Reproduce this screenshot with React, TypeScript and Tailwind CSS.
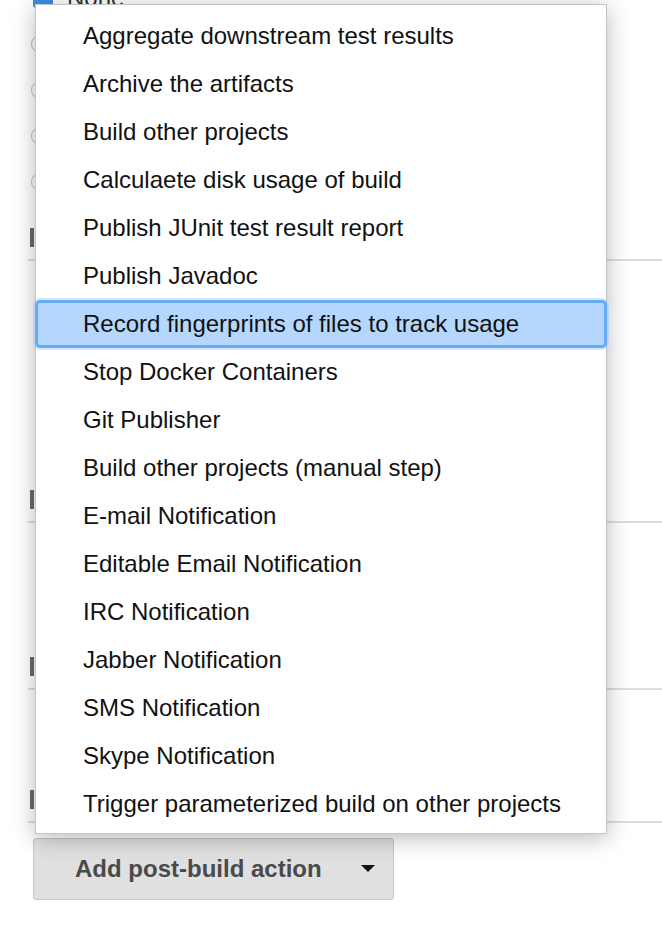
const items = [
  'Aggregate downstream test results',
  'Archive the artifacts',
  'Build other projects',
  'Calculaete disk usage of build',
  'Publish JUnit test result report',
  'Publish Javadoc',
  'Record fingerprints of files to track usage',
  'Stop Docker Containers',
  'Git Publisher',
  'Build other projects (manual step)',
  'E-mail Notification',
  'Editable Email Notification',
  'IRC Notification',
  'Jabber Notification',
  'SMS Notification',
  'Skype Notification',
  'Trigger parameterized build on other projects',
];

const selected = 6;

function Section({ height }: { height: number }) {
  // header handle on the left, divider line at the bottom
  return (
    <div className="flex flex-col justify-end" style={{ height }}>
      <div className="w-[4px] h-[19px] bg-[#6b6b6b] ml-[2px]" />
      <div className="h-[12px]" />
      <div className="h-[2px] bg-[#dddddd]" />
    </div>
  );
}

export default function App() {
  return (
    <div
      className="relative w-[662px] h-[926px] bg-white overflow-hidden"
      style={{ fontFamily: '"Liberation Sans", Arial, sans-serif' }}
    >
      {/* page behind the menu */}
      <div className="pl-[28px] flex flex-col">
        <div className="flex items-center gap-[14px] -mt-[12px] h-[20px]">
          <div className="w-[20px] h-[20px] rounded-[3px] bg-[#3d8fe8] ml-[5px]" />
          <span className="text-[24px] leading-[20px] text-[#333]">None</span>
        </div>
        <div className="flex flex-col gap-[28px] mt-[27px] ml-[3px]">
          {[0, 1, 2, 3].map((i) => (
            <div key={i} className="w-[18px] h-[18px] rounded-full border border-[#bbb]" />
          ))}
        </div>
        <div className="-mt-[4px]">
          <Section height={74} />
          <Section height={262} />
          <Section height={167} />
          <Section height={133} />
        </div>
        <div className="mt-[15px] ml-[5px] w-[361px] h-[62px] bg-[#e0e0e0] border border-[#c6c6c6] rounded-[3px] flex items-center pl-[41px]">
          <span className="text-[24px] font-bold text-[#4a4a4a]">Add post-build action</span>
          <svg className="ml-[39px]" width="14" height="8" viewBox="0 0 14 8">
            <path d="M0 0 L14 0 L7 7 Z" fill="#111" />
          </svg>
        </div>
      </div>

      {/* dropdown menu */}
      <div className="absolute left-[35px] top-[4px] w-[572px] bg-white border border-[#c4c4c4] pt-[7px] pb-[5px] shadow-[0_4px_22px_rgba(0,0,0,0.28)]">
        {items.map((label, i) =>
          i === selected ? (
            <div
              key={label}
              className="-mx-[1px] h-[48px] flex items-center pl-[45px] bg-[#b5d6fd] border-[3px] border-[#66acf7] rounded-[5px] shadow-[0_0_0_2px_rgba(160,200,250,0.45)] text-[24px] text-[#111]"
            >
              {label}
            </div>
          ) : (
            <div key={label} className="h-[48px] flex items-center pl-[47px] text-[24px] text-[#111]">
              {label}
            </div>
          )
        )}
      </div>
    </div>
  );
}
